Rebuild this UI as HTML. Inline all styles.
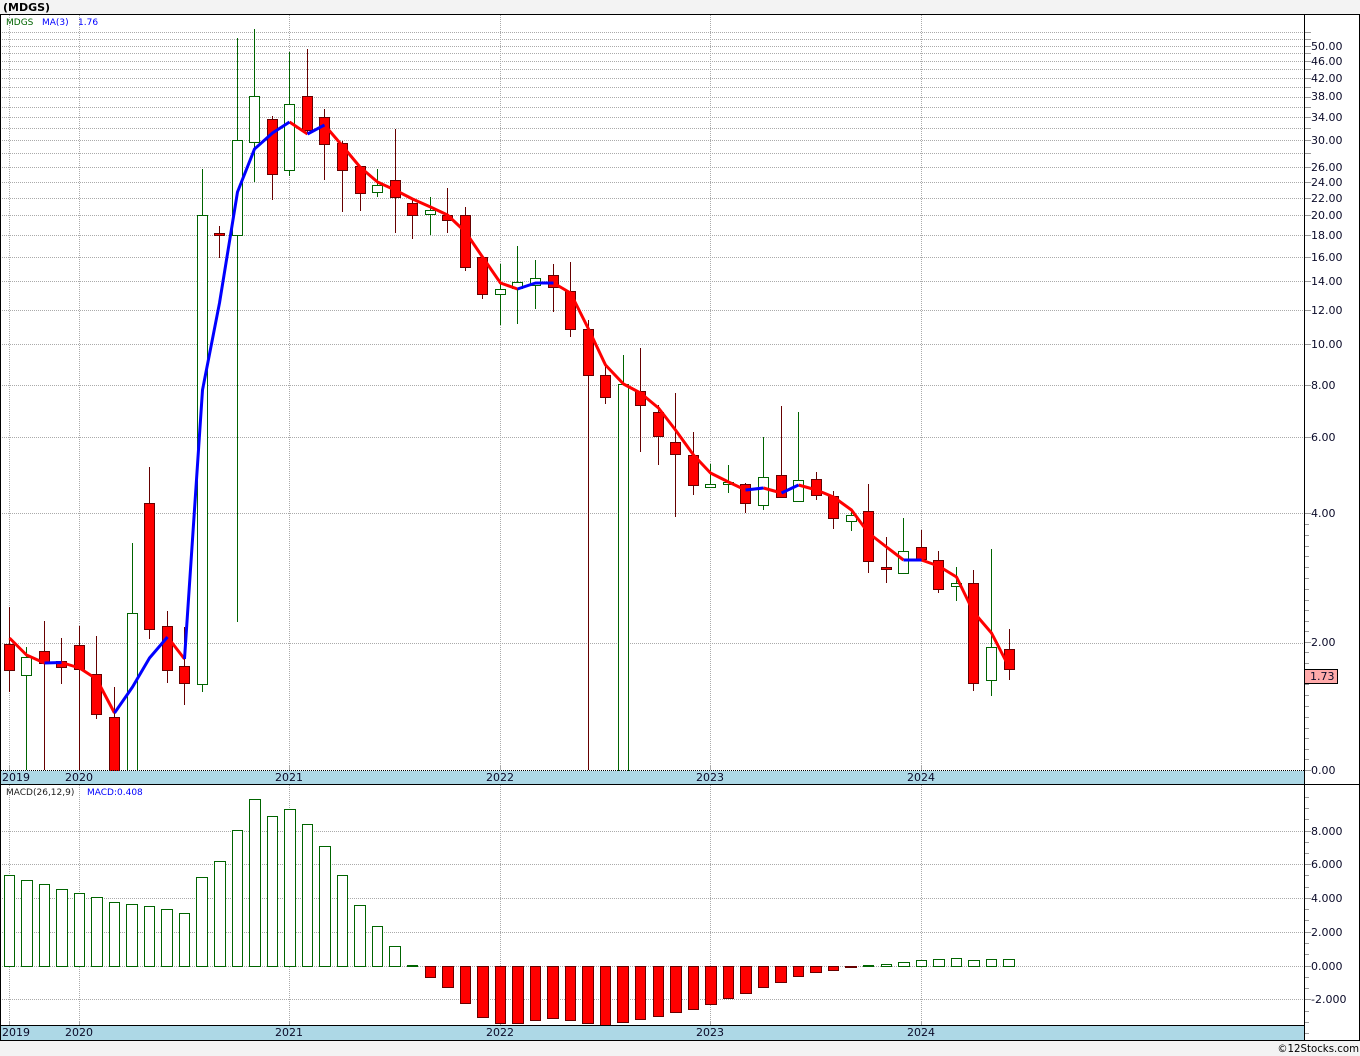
<!DOCTYPE html>
<html><head><meta charset="utf-8"><title>MDGS</title>
<style>
html,body{margin:0;padding:0;background:#f3f3f3}
svg{display:block}
text{font-family:"DejaVu Sans","Liberation Sans",sans-serif;font-size:11px;fill:#0a0a28}
.g rect,.g path{fill:#fff;stroke:#006400}
.r rect{fill:#f00;stroke:#600}
.r path{fill:none;stroke:#600}
.g path{fill:none}
.c{shape-rendering:crispEdges}
</style></head><body>
<svg width="1360" height="1056" viewBox="0 0 1360 1056" xmlns="http://www.w3.org/2000/svg">
<rect width="1360" height="1056" fill="#f3f3f3"/>
<text x="3" y="11" style="font-weight:bold;font-size:11px;fill:#000">(MDGS)</text>
<rect x="0" y="15" width="1360" height="1026" fill="#fff"/>
<g class="c">
<!-- grid -->
<path fill="none" stroke="#aaa" stroke-dasharray="1 1" d="M2 32.5H1304M2 39.5H1304M2 46.5H1304M2 53.5H1304M2 61.5H1304M2 69.5H1304M2 78.5H1304M2 87.5H1304M2 97.5H1304M2 107.5H1304M2 117.5H1304M2 128.5H1304M2 140.5H1304M2 153.5H1304M2 167.5H1304M2 182.5H1304M2 198.5H1304M2 215.5H1304M2 235.5H1304M2 257.5H1304M2 281.5H1304M2 310.5H1304M2 344.5H1304M2 385.5H1304M2 437.5H1304M2 513.5H1304M2 643.5H1304M2 831.5H1304M2 864.5H1304M2 898.5H1304M2 932.5H1304M2 966.5H1304M2 999.5H1304"/>
<path fill="none" stroke="#aaa" stroke-dasharray="1 1" d="M9.5 15V766M79.5 15V766M289.5 15V766M500.5 15V766M710.5 15V766M921.5 15V766M9.5 785V1021M79.5 785V1021M289.5 785V1021M500.5 785V1021M710.5 785V1021M921.5 785V1021"/>
<path fill="none" stroke="#aaa" d="M9.5 766V770M79.5 766V770M289.5 766V770M500.5 766V770M710.5 766V770M921.5 766V770M9.5 1021V1025M79.5 1021V1025M289.5 1021V1025M500.5 1021V1025M710.5 1021V1025M921.5 1021V1025"/>
<!-- axis ticks -->
<path fill="none" stroke="#999" d="M1305 32.5h6M1305 39.5h6M1305 46.5h6M1305 53.5h6M1305 61.5h6M1305 69.5h6M1305 78.5h6M1305 87.5h6M1305 97.5h6M1305 107.5h6M1305 117.5h6M1305 128.5h6M1305 140.5h6M1305 153.5h6M1305 167.5h6M1305 182.5h6M1305 198.5h6M1305 215.5h6M1305 235.5h6M1305 257.5h6M1305 281.5h6M1305 310.5h6M1305 344.5h6M1305 385.5h6M1305 437.5h6M1305 513.5h6M1305 524.5h4M1305 535.5h4M1305 546.5h4M1305 556.5h4M1305 567.5h4M1305 578.5h4M1305 589.5h4M1305 600.5h4M1305 610.5h4M1305 621.5h4M1305 631.5h4M1305 642.5h6M1305 652.5h4M1305 663.5h4M1305 684.5h4M1305 695.5h4M1305 706.5h4M1305 717.5h4M1305 728.5h4M1305 738.5h4M1305 749.5h4M1305 759.5h4M1305 770.5h6M1305 797.5h4M1305 808.5h4M1305 819.5h4M1305 831.5h6M1305 842.5h4M1305 853.5h4M1305 864.5h6M1305 875.5h4M1305 887.5h4M1305 898.5h6M1305 909.5h4M1305 920.5h4M1305 932.5h6M1305 943.5h4M1305 954.5h4M1305 966.5h6M1305 977.5h4M1305 988.5h4M1305 999.5h6M1305 1011.5h4M1305 1022.5h4M1305 1033.5h4"/>
<!-- candles green -->
<g class="g">
<path d="M26.5 647V770M132.5 543V770M202.5 169V692M237.5 38V622M254.5 29V182M289.5 52V176M377.5 169V197M430.5 197V235M500.5 264V325M517.5 246V324M535.5 260V309M623.5 355V770M710.5 464V488M728.5 465V493M763.5 437V510M798.5 412V501M851.5 512V531M903.5 518V573M956.5 567V601M991.5 549V696"/>
<rect x="21.5" y="657.5" width="10" height="18"/>
<rect x="127.5" y="613.5" width="10" height="160"/>
<rect x="197.5" y="215.5" width="10" height="469"/>
<rect x="232.5" y="140.5" width="10" height="95"/>
<rect x="249.5" y="96.5" width="10" height="46"/>
<rect x="284.5" y="104.5" width="10" height="66"/>
<rect x="372.5" y="185.5" width="10" height="7"/>
<rect x="425.5" y="210.5" width="10" height="4"/>
<rect x="495.5" y="289.5" width="10" height="5"/>
<rect x="512.5" y="282.5" width="10" height="6"/>
<rect x="530.5" y="278.5" width="10" height="7"/>
<rect x="618.5" y="384.5" width="10" height="390"/>
<rect x="705.5" y="484.5" width="10" height="3"/>
<rect x="723.5" y="482.5" width="10" height="2"/>
<rect x="758.5" y="477.5" width="10" height="28"/>
<rect x="793.5" y="480.5" width="10" height="21"/>
<rect x="846.5" y="515.5" width="10" height="6"/>
<rect x="898.5" y="551.5" width="10" height="22"/>
<rect x="951.5" y="583.5" width="10" height="3"/>
<rect x="986.5" y="647.5" width="10" height="33"/>
</g>
<!-- candles red -->
<g class="r">
<path d="M9.5 607V692M44.5 621V770M61.5 638V684M79.5 626V770M96.5 636V719M114.5 687V770M149.5 467V639M167.5 611V683M184.5 627V705M219.5 226V258M272.5 116V200M307.5 49V134M324.5 109V180M342.5 141V212M360.5 166V211M395.5 129V233M412.5 200V239M447.5 188V233M465.5 207V271M482.5 257V299M553.5 264V312M570.5 262V337M588.5 320V770M605.5 365V404M640.5 348V452M658.5 405V465M675.5 393V517M693.5 432V495M745.5 483V513M781.5 406V497M816.5 472V500M833.5 491V529M868.5 484V573M886.5 537V583M921.5 530V559M938.5 551V593M973.5 570V691M1009.5 629V680"/>
<rect x="4.5" y="644.5" width="10" height="26"/>
<rect x="39.5" y="651.5" width="10" height="12"/>
<rect x="56.5" y="661.5" width="10" height="6"/>
<rect x="74.5" y="645.5" width="10" height="24"/>
<rect x="91.5" y="674.5" width="10" height="40"/>
<rect x="109.5" y="717.5" width="10" height="56"/>
<rect x="144.5" y="503.5" width="10" height="126"/>
<rect x="162.5" y="626.5" width="10" height="44"/>
<rect x="179.5" y="666.5" width="10" height="17"/>
<rect x="214.5" y="233.5" width="10" height="2"/>
<rect x="267.5" y="119.5" width="10" height="55"/>
<rect x="302.5" y="96.5" width="10" height="34"/>
<rect x="319.5" y="117.5" width="10" height="27"/>
<rect x="337.5" y="143.5" width="10" height="27"/>
<rect x="355.5" y="166.5" width="10" height="27"/>
<rect x="390.5" y="180.5" width="10" height="17"/>
<rect x="407.5" y="203.5" width="10" height="12"/>
<rect x="442.5" y="215.5" width="10" height="5"/>
<rect x="460.5" y="215.5" width="10" height="52"/>
<rect x="477.5" y="257.5" width="10" height="37"/>
<rect x="548.5" y="275.5" width="10" height="12"/>
<rect x="565.5" y="291.5" width="10" height="38"/>
<rect x="583.5" y="329.5" width="10" height="46"/>
<rect x="600.5" y="375.5" width="10" height="22"/>
<rect x="635.5" y="391.5" width="10" height="14"/>
<rect x="653.5" y="412.5" width="10" height="24"/>
<rect x="670.5" y="442.5" width="10" height="12"/>
<rect x="688.5" y="455.5" width="10" height="30"/>
<rect x="740.5" y="484.5" width="10" height="19"/>
<rect x="776.5" y="475.5" width="10" height="22"/>
<rect x="811.5" y="479.5" width="10" height="16"/>
<rect x="828.5" y="496.5" width="10" height="22"/>
<rect x="863.5" y="511.5" width="10" height="50"/>
<rect x="881.5" y="567.5" width="10" height="2"/>
<rect x="916.5" y="547.5" width="10" height="12"/>
<rect x="933.5" y="560.5" width="10" height="29"/>
<rect x="968.5" y="583.5" width="10" height="100"/>
<rect x="1004.5" y="649.5" width="10" height="20"/>
</g>
<!-- MACD green -->
<g class="g">
<rect x="4.5" y="875.5" width="10" height="91"/>
<rect x="21.5" y="880.5" width="11" height="86"/>
<rect x="39.5" y="884.5" width="10" height="82"/>
<rect x="56.5" y="889.5" width="11" height="77"/>
<rect x="74.5" y="893.5" width="10" height="73"/>
<rect x="91.5" y="897.5" width="11" height="69"/>
<rect x="109.5" y="902.5" width="10" height="64"/>
<rect x="126.5" y="904.5" width="11" height="62"/>
<rect x="144.5" y="906.5" width="10" height="60"/>
<rect x="161.5" y="909.5" width="11" height="57"/>
<rect x="179.5" y="913.5" width="10" height="53"/>
<rect x="196.5" y="877.5" width="11" height="89"/>
<rect x="214.5" y="861.5" width="11" height="105"/>
<rect x="232.5" y="830.5" width="10" height="136"/>
<rect x="249.5" y="799.5" width="11" height="167"/>
<rect x="267.5" y="816.5" width="10" height="150"/>
<rect x="284.5" y="809.5" width="11" height="157"/>
<rect x="302.5" y="824.5" width="10" height="142"/>
<rect x="319.5" y="846.5" width="11" height="120"/>
<rect x="337.5" y="875.5" width="10" height="91"/>
<rect x="354.5" y="905.5" width="11" height="61"/>
<rect x="372.5" y="926.5" width="10" height="40"/>
<rect x="389.5" y="946.5" width="11" height="20"/>
<rect x="407.5" y="965.5" width="10" height="1"/>
<rect x="863.5" y="965.5" width="10" height="1"/>
<rect x="881.5" y="964.5" width="10" height="2"/>
<rect x="898.5" y="962.5" width="11" height="4"/>
<rect x="916.5" y="960.5" width="10" height="6"/>
<rect x="933.5" y="959.5" width="11" height="7"/>
<rect x="951.5" y="958.5" width="10" height="8"/>
<rect x="968.5" y="960.5" width="11" height="6"/>
<rect x="986.5" y="959.5" width="10" height="7"/>
<rect x="1003.5" y="959.5" width="11" height="7"/>
</g>
<!-- MACD red -->
<g class="r">
<rect x="425.5" y="966.5" width="10" height="11"/>
<rect x="442.5" y="966.5" width="11" height="21"/>
<rect x="460.5" y="966.5" width="10" height="37"/>
<rect x="477.5" y="966.5" width="11" height="51"/>
<rect x="495.5" y="966.5" width="10" height="57"/>
<rect x="512.5" y="966.5" width="11" height="57"/>
<rect x="530.5" y="966.5" width="10" height="54"/>
<rect x="547.5" y="966.5" width="11" height="52"/>
<rect x="565.5" y="966.5" width="10" height="54"/>
<rect x="582.5" y="966.5" width="11" height="57"/>
<rect x="600.5" y="966.5" width="10" height="62"/>
<rect x="617.5" y="966.5" width="11" height="56"/>
<rect x="635.5" y="966.5" width="10" height="53"/>
<rect x="653.5" y="966.5" width="10" height="50"/>
<rect x="670.5" y="966.5" width="11" height="46"/>
<rect x="688.5" y="966.5" width="10" height="43"/>
<rect x="705.5" y="966.5" width="11" height="38"/>
<rect x="723.5" y="966.5" width="10" height="32"/>
<rect x="740.5" y="966.5" width="11" height="27"/>
<rect x="758.5" y="966.5" width="10" height="21"/>
<rect x="775.5" y="966.5" width="11" height="16"/>
<rect x="793.5" y="966.5" width="10" height="10"/>
<rect x="810.5" y="966.5" width="11" height="6"/>
<rect x="828.5" y="966.5" width="10" height="4"/>
<rect x="845.5" y="966.5" width="11" height="1"/>
</g>
<!-- axis strips drawn over the bars -->
<rect x="1" y="771" width="1303" height="13" fill="#add8e6"/>
<rect x="1" y="1026" width="1303" height="14" fill="#add8e6"/>
<!-- frame -->
<path fill="none" stroke="#000" d="M0 14.5H1360M0.5 14V1041M1304.5 14V1041M1359.5 14V1041M0 784.5H1360M0 1025.5H1304M0 1040.5H1360"/>
<path fill="none" stroke="#000" stroke-dasharray="1 1" d="M1 770.5H1304"/>
</g>
<!-- MA -->
<g fill="none" stroke-width="3" stroke-linejoin="round" stroke-linecap="butt">
<path stroke="#f00" d="M9.5 638L26.5 655L44.5 663M61.5 662.5L79.5 668L96.5 679L114.5 713M167.5 637L184.5 659M289.5 122L307.5 134M324.5 125L342.5 146L360 167L377.5 182L395 190L412.5 199L430.5 207L447.5 215L465.5 232L482.5 257L500.5 283L517.5 289M553.5 283L570.5 293L588.5 329L605.5 365L623.5 384L640.5 393L658.5 408L675.5 430L693.5 455L710.5 473L728.5 482L745.5 490M763.5 488L781.5 493M798.5 485L816.5 490L833.5 497L851.5 510L868.5 533L886.5 547L903.5 560M921.5 560L938.5 566L956.5 577L973.5 612L991.5 633L1009.5 668"/>
<path stroke="#00f" d="M44.5 663L61.5 662.5M114.5 713L132.5 687L149.5 658L167.5 637M184.5 659L202.5 390L219.5 303L237.5 192L254.5 149L272.5 133L289.5 122M307.5 134L324.5 125M517.5 289L535.5 283L553.5 283M745.5 490L763.5 488M781.5 493L798.5 485M903.5 560L921.5 560"/>
</g>
<!-- price tag -->
<rect class="c" x="1304.5" y="669.5" width="33" height="14" fill="#ffaaaa" stroke="#000"/>
<text x="1310" y="680">1.73</text>
<!-- legends -->
<text x="6" y="25" style="font-size:9px;fill:#006400">MDGS</text>
<text x="42" y="25" style="font-size:9px;fill:#0000ff">MA(3)</text>
<text x="78" y="25" style="font-size:9px;fill:#0000ff">1.76</text>
<text x="6" y="795" style="font-size:9px;fill:#222">MACD(26,12,9)</text>
<text x="87" y="795" style="font-size:9px;fill:#0000ff">MACD:0.408</text>
<!-- y axis labels -->
<text x="1311" y="50">50.00</text>
<text x="1311" y="65">46.00</text>
<text x="1311" y="82">42.00</text>
<text x="1311" y="100">38.00</text>
<text x="1311" y="121">34.00</text>
<text x="1311" y="144">30.00</text>
<text x="1311" y="171">26.00</text>
<text x="1311" y="186">24.00</text>
<text x="1311" y="202">22.00</text>
<text x="1311" y="219">20.00</text>
<text x="1311" y="239">18.00</text>
<text x="1311" y="261">16.00</text>
<text x="1311" y="285">14.00</text>
<text x="1311" y="314">12.00</text>
<text x="1311" y="348">10.00</text>
<text x="1311" y="389">8.00</text>
<text x="1311" y="441">6.00</text>
<text x="1311" y="517">4.00</text>
<text x="1311" y="646">2.00</text>
<text x="1311" y="774">0.00</text>
<text x="1311" y="835">8.000</text>
<text x="1311" y="868">6.000</text>
<text x="1311" y="902">4.000</text>
<text x="1311" y="936">2.000</text>
<text x="1311" y="970">0.000</text>
<text x="1311" y="1003">-2.000</text>
<!-- years -->
<text x="2" y="781">2019</text>
<text x="65" y="781">2020</text>
<text x="275" y="781">2021</text>
<text x="486" y="781">2022</text>
<text x="696" y="781">2023</text>
<text x="907" y="781">2024</text>
<text x="2" y="1036">2019</text>
<text x="65" y="1036">2020</text>
<text x="275" y="1036">2021</text>
<text x="486" y="1036">2022</text>
<text x="696" y="1036">2023</text>
<text x="907" y="1036">2024</text>
<text x="1359" y="1052" text-anchor="end" style="font-size:10.2px;fill:#000">©12Stocks.com</text>
</svg>
</body></html>
